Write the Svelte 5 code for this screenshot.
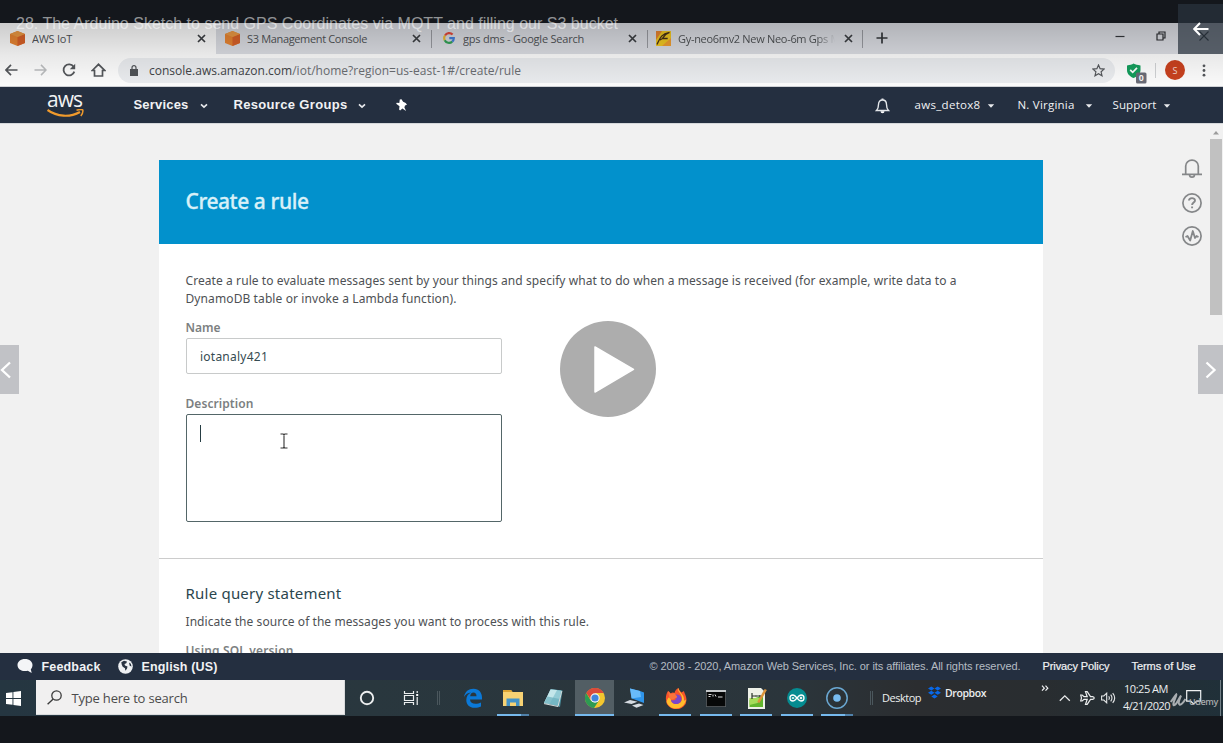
<script>
  // Spreads a line of text over a fixed measure by adjusting its tracking.
  function measure(node, width) {
    const natural = node.getBoundingClientRect().width;
    node.style.letterSpacing = `${(width - natural) / node.textContent.length}px`;
  }

  const tabs = [
    { label: 'AWS IoT', width: 40, icon: 'cube', active: true },
    { label: 'S3 Management Console', width: 120, icon: 'cube' },
    { label: 'gps dms - Google Search', width: 121, icon: 'google' },
    { label: 'Gy-neo6mv2 New Neo-6m Gps M', width: 162, icon: 'flash' },
  ];
</script>

{#snippet cube()}
  <svg width="15" height="15" viewBox="0 0 15 15"><path d="M7.5 0 15 3v9L7.5 15 0 12V3z" fill="#ec8733" /><path d="M7.5 6 15 3v9l-7.500 3z" fill="#dc6329" /><path d="M7.500 0 15 3 7.500 6 0 3z" fill="#f09c45" /></svg>
{/snippet}

{#snippet caret()}
  <svg width="8" height="6" viewBox="0 0 8 6"><path d="M.8 1.200h6.400L4 4.800z" fill="#e8eaed" /></svg>
{/snippet}

{#snippet chevron()}
  <svg width="8" height="6" viewBox="0 0 8 6"><path d="M1 1.300 4 4.200 7 1.300" fill="none" stroke="#e8eaed" stroke-width="1.600" /></svg>
{/snippet}

<div class="player">
  <div class="browser">
    <div class="tabs">
      {#each tabs as tab}
        <div class="tab" class:active={tab.active}>
          {#if tab.icon === 'cube'}
            {@render cube()}
          {:else if tab.icon === 'google'}
            <svg class="google" width="12" height="12" viewBox="0 0 12 12"><g fill="none" stroke-width="2.200"><path d="M2 3.500A4.800 4.800 0 0 1 9.600 2.600" stroke="#e64a3c" /><path d="M1.700 8.200A4.800 4.800 0 0 1 2 3.500" stroke="#f0bc34" /><path d="M9.200 9.600A4.800 4.800 0 0 1 1.700 8.200" stroke="#34a558" /><path d="M6.300 6.200h4.500a4.600 4.600 0 0 1-1.600 3.400" stroke="#4482e0" /></g></svg>
          {:else}
            <svg width="15" height="15" viewBox="0 0 15 15"><path d="M0 0h15v15H0z" fill="#f5cb22" /><path d="M0 0h6L0 9z" fill="#ea8630" /><path d="M15 7v8H6z" fill="#f4a030" /><path d="M1 13.500C4 7 5 3 13.500 1.500 9 3 8 5 6.500 7.500h5.200M6.500 7.500 4 9" fill="none" stroke="#473016" stroke-width="1.300" /></svg>
          {/if}
          <span class="label"><span use:measure={tab.width}>{tab.label}</span></span>
          <svg width="9" height="9" viewBox="0 0 9 9"><path d="m1 1 7 7M8 1 1 8" stroke="#3c3f43" stroke-width="1.700" /></svg>
        </div>
      {/each}
      <svg class="plus" width="12" height="12" viewBox="0 0 12 12"><path d="M6 .5v11M.5 6h11" stroke="#34373b" stroke-width="1.700" /></svg>
      <div class="controls">
        <svg width="10" height="10" viewBox="0 0 10 10"><path d="M.5 5.500h9" stroke="#35383c" stroke-width="1.200" /></svg>
        <svg width="10" height="10" viewBox="0 0 10 10"><path d="M1 3h6v6H1zM3 3V1h6v6H7" fill="none" stroke="#2c2f33" stroke-width="1.200" /></svg>
        <svg width="10" height="10" viewBox="0 0 10 10"><path d="m.5.500 9 9m0-9-9 9" stroke="#22262c" stroke-width="1.100" /></svg>
      </div>
    </div>

    <div class="toolbar">
      <svg width="13" height="12" viewBox="0 0 13 12"><path d="M12.500 6H1.200M6 .900 1 6l5 5.100" fill="none" stroke="#55585c" stroke-width="1.700" /></svg>
      <svg width="13" height="12" viewBox="0 0 13 12"><path d="M.5 6h11.300M7 .900 12 6l-5 5.100" fill="none" stroke="#bdbfc1" stroke-width="1.500" /></svg>
      <svg width="14" height="14" viewBox="0 0 14 14"><path d="M11.600 3.800A5.500 5.500 0 1 0 12.300 8.600" fill="none" stroke="#55585c" stroke-width="1.800" /><path d="M13.200.800v5.400H7.800z" fill="#55585c" /></svg>
      <svg width="15" height="14" viewBox="0 0 15 14"><path d="M1.300 7.500 7.500 1.300l6.200 6.200h-2.200V13h-8V7.500z" fill="none" stroke="#55585c" stroke-width="1.700" /></svg>
      <div class="url">
        <svg width="8" height="11" viewBox="0 0 8 11"><path d="M0 4h8v7H0z" fill="#515458" /><path d="M2 4.500V2.700a2 2 0 0 1 4 0v1.800" fill="none" stroke="#515458" stroke-width="1.200" /></svg>
        <span class="address" use:measure={372}><b>console.aws.amazon.com</b>/iot/home?region=us-east-1#/create/rule</span>
        <svg width="13" height="13" viewBox="0 0 13 13"><path d="m6.500 1 1.600 3.700 4 .400-3 2.700.900 4-3.500-2.100L3 11.800l.900-4-3-2.700 4-.400z" fill="none" stroke="#56595d" stroke-width="1.200" /></svg>
      </div>
      <svg class="shield" width="22" height="21" viewBox="0 0 22 21"><path d="M1 2.500C4 2 6 1.500 7.500.500 9.500 1.500 11.500 2 14.500 2.500V7c0 4-3.500 6.500-7 8C4 13.500 1 11 1 7z" fill="#149f5d" /><path d="m4.200 6.800 2.500 2.500L11 4.800" fill="none" stroke="#fff" stroke-width="1.700" /><rect x="10" y="9.500" width="10.500" height="11" rx="1.500" fill="#6b6d78" /><text x="12.700" y="18.400">0</text></svg>
      <i class="divider"></i>
      <span class="avatar">S</span>
      <svg width="4" height="13" viewBox="0 0 4 13"><g fill="#55585c"><circle cx="2" cy="1.800" r="1.400" /><circle cx="2" cy="6.500" r="1.400" /><circle cx="2" cy="11.200" r="1.400" /></g></svg>
    </div>

    <nav>
      <div class="logo">
        <span use:measure={35}>aws</span>
        <svg width="38" height="9" viewBox="0 0 38 9"><path d="M.5 1C10 8 23 8.500 33 3" fill="none" stroke="#f09a2c" stroke-width="2.200" /><path d="M29.500 1.300c3-1 5.500-1 6.300-.300.300 1.500-.300 4-2 6" fill="none" stroke="#f09a2c" stroke-width="1.500" /></svg>
      </div>
      <b><span use:measure={55}>Services</span></b>
      {@render chevron()}
      <b><span use:measure={114}>Resource Groups</span></b>
      {@render chevron()}
      <svg width="13" height="13" viewBox="0 0 13 13"><path d="M4.800.500 6.500.300l1.600 2.500 2.600 1.100 1.300 1.900-2 .8-.6 1.900 1.700 3.600-3.700-2.700-2.300 2.200-1-1.100.4-3.300L1.200 4.700l.500-.9 2.600.1z" fill="#fff" /></svg>
      <svg width="15" height="16" viewBox="0 0 15 16"><path d="M1.500 12.500c1.500-1.500 2-3 2-6 0-2.700 1.500-4.500 4-4.500s4 1.800 4 4.500c0 3 .500 4.500 2 6z" fill="none" stroke="#e4e7ea" stroke-width="1.400" /><path d="M7.500.500v1.500" stroke="#e4e7ea" stroke-width="2" /><path d="M5.500 13.200h4a2 2 0 0 1-4 0" fill="#fff" /></svg>
      <span><span use:measure={66}>aws_detox8</span></span>
      {@render caret()}
      <span><span use:measure={57}>N. Virginia</span></span>
      {@render caret()}
      <span><span use:measure={44}>Support</span></span>
      {@render caret()}
    </nav>

    <div class="viewport">
      <main>
        <header><h1 use:measure={123}>Create a rule</h1></header>
        <section class="details">
          <p><span use:measure={771}>Create a rule to evaluate messages sent by your things and specify what to do when a message is received (for example, write data to a</span></p>
          <p><span use:measure={271}>DynamoDB table or invoke a Lambda function).</span></p>
          <div class="caption name"><span use:measure={35}>Name</span></div>
          <div class="field"><span use:measure={68}>iotanaly421</span></div>
          <div class="caption desc"><span use:measure={68}>Description</span></div>
          <div class="area"><i></i>
            <svg width="8" height="16" viewBox="0 0 8 16"><path d="M.5 1h2.700l.800.700.800-.700h2.700M4 1.700v12.600M.5 15h2.700l.800-.700.800.700h2.700" fill="none" stroke="#333" stroke-width="1.100" /></svg>
          </div>
        </section>
        <section class="query">
          <h2><span use:measure={156}>Rule query statement</span></h2>
          <p><span use:measure={403.500}>Indicate the source of the messages you want to process with this rule.</span></p>
          <div class="caption sql"><span use:measure={108}>Using SQL version</span></div>
        </section>
      </main>
      <aside>
        <svg width="20" height="20" viewBox="0 0 20 20"><path d="M3.700 15V7a6.300 5.800 0 0 1 12.600 0v8M0 15.300h20M7.500 15.500a2.500 2.700 0 0 0 5 0" fill="none" stroke="#858789" stroke-width="1.700" /></svg>
        <svg width="20" height="20" viewBox="0 0 20 20"><circle cx="10" cy="10" r="9.100" fill="none" stroke="#858789" stroke-width="1.700" /><path d="M7 7.600C7 4.300 13 4.300 13 7.500c0 2-2.900 2.200-2.900 4.500M10.100 13.500v1.800" fill="none" stroke="#858789" stroke-width="1.900" /></svg>
        <svg width="20" height="20" viewBox="0 0 20 20"><circle cx="10" cy="10" r="9.100" fill="none" stroke="#858789" stroke-width="1.700" /><path d="M3.500 11 5.500 10l2.700 4.500 2.600-9.500 2.200 7 1.500-2 2 1" fill="none" stroke="#858789" stroke-width="1.800" stroke-linejoin="round" /></svg>
      </aside>
      <div class="scroll">
        <svg width="8" height="5" viewBox="0 0 8 5"><path d="M1 4.500h6L4 1z" fill="#9c9c9c" /></svg>
        <i></i>
        <svg width="8" height="5" viewBox="0 0 8 5"><path d="M1 .500h6L4 4z" fill="#444" /></svg>
      </div>
    </div>

    <footer>
      <svg width="16" height="14" viewBox="0 0 16 14"><path d="M8 0c4.500 0 7.500 2.700 7.500 6 0 2-.700 3.300-1.700 4.300l.900 3.700-3.900-2.200C5 13 .5 10.300.500 6 .500 2.700 3.500 0 8 0" fill="#f4f5f7" /></svg>
      <b><span use:measure={59}>Feedback</span></b>
      <svg width="15" height="15" viewBox="0 0 15 15"><circle cx="7.500" cy="7.500" r="7.300" fill="#eef0f2" /><path d="M3.300 3.300 6 1.800l3 .700-.700 1.700-1.800.900.500 1.300 2.500 1-.500 2.300-1.700 2-.300-2.500-2.300-1.500-1-2.200zM11 3.500l1.800 1.300.700 2.700-1.800-.700z" fill="#293341" /></svg>
      <b><span use:measure={76}>English (US)</span></b>
      <small><span use:measure={371}>© 2008 - 2020, Amazon Web Services, Inc. or its affiliates. All rights reserved.</span></small>
      <em><span use:measure={67}>Privacy Policy</span></em>
      <em><span use:measure={64}>Terms of Use</span></em>
    </footer>
  </div>

  <div class="taskbar">
    <div class="start"><svg width="15" height="15" viewBox="0 0 15 15"><path d="M0 2.100 6.500 1.200V7H0zM7.400 1.100 15 0v7H7.400zM0 8h6.500v5.800L0 12.900zM7.400 8H15v7l-7.600-1.100z" fill="#fff" /></svg></div>
    <div class="search">
      <svg width="15" height="15" viewBox="0 0 15 15"><circle cx="9.500" cy="5.500" r="4.700" fill="none" stroke="#3b3b3b" stroke-width="1.300" /><path d="M6.200 8.900.600 14.300" stroke="#3b3b3b" stroke-width="1.400" /></svg>
      <span use:measure={116}>Type here to search</span>
    </div>
    <div class="app"><svg width="16" height="16" viewBox="0 0 16 16"><circle cx="8" cy="8" r="6.200" fill="none" stroke="#eceeef" stroke-width="1.900" /></svg></div>
    <div class="app"><svg width="16" height="16" viewBox="0 0 16 16"><path d="M1.500 1v2.500h9V1M1.500 5.500h9v5h-9zM1.500 15v-2.500h9V15M14.200 1v2M14.200 7v8" fill="none" stroke="#eceeef" stroke-width="1.200" /><path d="M13.200 4h2v2h-2z" fill="#fff" /></svg></div>
    <i class="grip"></i>
    <div class="app"><svg width="20" height="20" viewBox="0 0 20 20"><path d="M1 9C2 3.500 5.500.700 10.500.700c5.500 0 8.500 4 8.500 8.800v2H7c.200 3 2.500 4.300 5.500 4.300 2 0 4-.500 5.500-1.400v4c-1.700.900-3.700 1.400-6.300 1.400-5.200 0-8.400-3.100-8.400-7.800 0-3.500 2-6.200 4.700-7.400C5 4.800 2.500 6.500 1 9m6.200-.8h6.300c0-2.600-1.200-3.800-3-3.800-2 0-3.100 1.600-3.300 3.800" fill="#0b79d8" /></svg></div>
    <div class="app open explorer"><svg width="20" height="18" viewBox="0 0 20 18"><path d="M0 1h8l1.500 2H20v14H0z" fill="#f7d273" /><path d="M0 1h8l1.500 2H0z" fill="#dca434" /><path d="M3.500 17V9.500h13V17H13v-3.500H7V17z" fill="#4493c8" /></svg></div>
    <div class="app"><svg width="20" height="20" viewBox="0 0 20 20"><path d="M7.500 1 19.500 2.500 17 19 14.500 18z" fill="#4a8f9e" /><path d="m7.500 1.500 11 1L15 18 1 15z" fill="#93cbd5" /><path d="M7.500 1.500 1 15l5.500 1.200L14 2z" fill="#c3e6ea" /><path d="m4.500 8.500-3.500 6.500 14 3 1.700-7z" fill="#68aebc" opacity=".7" /><path d="M1 15.600 15 18.500 18.800 3" fill="none" stroke="#d5dadb" /></svg></div>
    <div class="app open chrome"><svg width="20" height="20" viewBox="0 0 20 20"><circle cx="10" cy="10" r="10" fill="#f3c62e" /><path d="M10 10 1.300 5A10 10 0 0 1 18.700 5H10z" fill="#db4a3b" /><path d="M1.300 5A10 10 0 0 0 9 20l5-7.500H5.700z" fill="#2d9b53" /><path d="M1.300 5 6 12l4-7z" fill="#db4a3b" /><circle cx="10" cy="10" r="4.700" fill="#f4f4f4" /><circle cx="10" cy="10" r="3.600" fill="#4285dc" /></svg></div>
    <div class="app"><svg width="21" height="20" viewBox="0 0 21 20"><path d="m6 .5 10 2.500 4 1.500v10.500L8 10.500z" fill="#2f95ea" /><path d="m6 .5 10 2.500 1 6-9.500 1.500z" fill="#68bbfa" /><path d="M0 14.500 6 12l7.500 1.800L7.500 16zM8 17.500l7-2 4.500 1.500-7 2.700z" fill="#d6dce2" /></svg></div>
    <div class="app open"><svg width="22" height="21" viewBox="0 0 22 21"><path d="M3 3c1 .500 2 1.500 2.500 2.500C7.500 4 9 4.500 9.500 5 10 2.500 11.500 1 13.500 0c.500 2 1.500 3 3 4.500L19 3c0 2 2.500 4.500 2.500 9A10.200 9.300 0 0 1 1 12C.5 8.500 1.500 5.500 3 3" fill="#f8542b" /><path d="M13.500 0c-2 3.500 3.500 5 3.500 10.500 0 3-2.500 5.500-6 5.500s-5-2.500-5-4.500C4 8 3 9 1.500 14c2 4.500 5.500 6.500 9.500 6.500 6 0 9.500-4.500 10-9-1 1-1.500 1-2 1C19.500 6 14 5 13.500 0" fill="#ffbd2b" /><path d="M10.500 6.500c3.500-.500 6 1.500 6 4.500s-2.500 5-5.500 5-5-2-5-4.300c1.500 1 4 1 5.500-1.200-2 0-3-.700-3-2z" fill="#7a47c9" /><path d="M3 3 6 6l3.500-1C10 7 13 8 12 9.500 10 10 9.500 11 8 11.500 6 12 4 11 4 8z" fill="#fb743a" /></svg></div>
    <div class="app open"><svg width="20" height="17" viewBox="0 0 20 17"><path d="M0 0h20v17H0z" fill="#5c6265" /><path d="M0 0h20v2H0z" fill="#c5c8ca" /><path d="M.8 2h18.400v14.200H.8z" fill="#070808" /><path d="M2.500 4.500h3M2.500 6.500h2M7 4.500v2M9 4.500l1 2M12 7h4.500" stroke="#ddd" /></svg></div>
    <div class="app open"><svg width="20" height="21" viewBox="0 0 20 21"><path d="M1 0h13l4 4v17H1z" fill="#eef1e8" /><path d="M2.500 12 16 7.500V19h-13.500z" fill="#62b52c" /><path d="M2.500 10h9l3 1-4 4-8 2z" fill="#a5dc59" /><path d="M5 5v6M5 8h3M10 8h3M9 7v2M13 7v2" stroke="#293429" stroke-width="1.200" /><path d="m18.800 1.500-7.500 13" stroke="#db943a" stroke-width="2.500" /></svg></div>
    <div class="app open"><svg width="20" height="20" viewBox="0 0 20 20"><circle cx="10" cy="10" r="10" fill="#058c91" /><path d="M10 10C8 7.500 7.200 7 6 7a3 3 0 0 0 0 6c1.200 0 2-.500 4-3s2.800-3 4-3a3 3 0 0 1 0 6c-1.200 0-2-.500-4-3M4.800 10h2.400M12.800 10h2.400M14 8.800v2.400" fill="none" stroke="#fff" stroke-width="1.300" /></svg></div>
    <div class="app open recorder"><svg width="22" height="22" viewBox="0 0 22 22"><circle cx="11" cy="11" r="10.200" fill="none" stroke="#6aa7d1" stroke-width="1.500" /><circle cx="11" cy="11" r="3.800" fill="#78bbef" /></svg></div>
    <i class="grip second"></i>
    <div class="desktop"><span use:measure={39}>Desktop</span></div>
    <div class="dropbox">
      <svg width="13" height="13" viewBox="0 0 13 13"><path d="M3.300.500 6.500 2.500 3.300 4.500 0 2.500zM9.700.500 13 2.500 9.700 4.500 6.500 2.500zM3.300 4.800l3.200 2-3.200 2-3.300-2zM9.700 4.800l3.300 2-3.300 2-3.200-2zM6.500 8.600 9.700 10.500 6.500 12.500 3.300 10.500z" fill="#0868e8" /></svg>
      <span use:measure={41}>Dropbox</span>
    </div>
    <svg class="more" width="8" height="7" viewBox="0 0 8 7"><path d="m1 .700 2.300 2.500L1 5.700M4.500.700l2.300 2.500-2.300 2.500" fill="none" stroke="#f0f1f2" stroke-width="1.200" /></svg>
    <div class="tray">
      <svg width="12" height="8" viewBox="0 0 12 8"><path d="m.8 6.800 5-5 5 5" fill="none" stroke="#e8eaeb" stroke-width="1.300" /></svg>
      <svg width="15" height="14" viewBox="0 0 15 14"><path d="M.7 4h1.500L4 5.700h3.200L5.500.700h1.700L10.500 5.700h2c2.300.500 2.300 2.100 0 2.600h-2l-3.300 5H5.500l1.700-5H4L2.200 10H.7l.8-3z" fill="none" stroke="#eceeef" stroke-width="1.200" /></svg>
      <svg width="15" height="12" viewBox="0 0 15 12"><path d="M.6 4h2.200L5.700 1.200v9.600L2.800 8H.6zM7.700 4.200q1.300 1.800 0 3.600M9.700 2.700q2.500 3.300 0 6.600M11.700 1.200q4 4.800 0 9.600" fill="none" stroke="#e6e8e9" stroke-width="1.100" /></svg>
    </div>
    <div class="clock"><span use:measure={44}>10:25 AM</span><span use:measure={47}>4/21/2020</span></div>
    <div class="notify">
      <svg width="16" height="15" viewBox="0 0 16 15"><path d="M.7.700h14v10.500h-4L7.700 14l-3-2.800h-4z" fill="none" stroke="#eef0f1" stroke-width="1.200" /></svg>
      <div class="brand">
        <svg width="17" height="15" viewBox="0 0 17 15"><path d="M.8 9C3 6 5 2.500 6.200 1.500 7 3.500 2.500 9 3.500 11.800 5 14 9 6 11 2.500 9 7 8 10.500 9.500 11.500c2 .8 4.500-3 6-5.500" fill="none" stroke="#a9adb0" stroke-width="2.100" /></svg>
        <span use:measure={29}>Udemy</span>
      </div>
    </div>
    <i class="edge"></i>
  </div>

  <div class="shade"></div>
  <div class="title"><span use:measure={602}>28. The Arduino Sketch to send GPS Coordinates via MQTT and filling our S3 bucket</span></div>
  <div class="back"><svg width="16" height="14" viewBox="0 0 16 14"><path d="M15.500 7H1.500M7 1 1.200 7 7 13" fill="none" stroke="#fff" stroke-width="2" /></svg></div>
  <div class="step previous"><svg width="12" height="18" viewBox="0 0 12 18"><path d="M10 1.500 2 9l8 7.500" fill="none" stroke="#fff" stroke-width="2.300" /></svg></div>
  <div class="step next"><svg width="12" height="18" viewBox="0 0 12 18"><path d="m1.500 1.500 8 7.500-8 7.500" fill="none" stroke="#fff" stroke-width="2.300" /></svg></div>
  <svg class="play" width="96" height="96" viewBox="0 0 96 96"><circle cx="48" cy="48" r="48" fill="#adadad" /><path d="M35 26v45l38.500-22.700z" fill="#fff" stroke="#fff" stroke-width="1.500" stroke-linejoin="round" /></svg>
</div>

<style>
  :global(body) { background: #14171c; }
  .player { position: relative; box-sizing: border-box; width: 1223px; height: 743px; padding-top: 23px; overflow: hidden; background: #14171c; font-family: "Open Sans", sans-serif; }
  .player :global(svg) { display: block; flex: none; }
  span { white-space: nowrap; }
  .browser { display: grid; grid-template-rows: 31px 33px 36px 530px 27px; height: 657px; }

  .tabs { display: grid; grid-template-columns: 216px 215px 216px 216px 231px 1fr; background: linear-gradient(#9b9da3, #9b9da3) 862px 7px / 1px 18px no-repeat, #dee0e6; }
  .tab { display: flex; align-items: center; box-sizing: border-box; padding: 0 10px 1px 9px; gap: 7px; font-size: 11px; color: #515457; min-width: 0; }
  .tab.active { background: #fff; padding-left: 10px; }
  .tab:nth-child(3), .tab:nth-child(4) { background: linear-gradient(#9b9da3, #9b9da3) 0 7px / 1px 18px no-repeat; }
  .tab:nth-child(3) { padding-left: 12px; gap: 8px; }
  .label { flex: 1; overflow: hidden; min-width: 0; }
  .tab:nth-child(4) .label { margin-right: 2px; mask-image: linear-gradient(90deg, #000 138px, transparent 157px); }
  .plus { box-sizing: content-box; padding: 9px 0 10px 13px; width: 12px; }
  .controls { display: grid; grid-template-columns: 41px 43px 10px; align-items: center; padding: 0 0 5px 21px; }

  .toolbar { display: grid; grid-template-columns: 29px 28px 29px 27px 1009px 28px 10px 37px 4px; align-items: center; padding-left: 5px; background: #fff; border-bottom: 1px solid #cfd1d5; }
  .url { display: grid; grid-template-columns: 19px 943px 13px; align-items: center; width: 997px; height: 25px; box-sizing: border-box; padding-left: 12px; border-radius: 13px; background: #edeff2; }
  .address { justify-self: start; font-size: 12px; color: #6b6e72; }
  .address b { color: #414448; font-weight: 400; }
  .toolbar :global(svg text) { font: bold 9px "Liberation Sans", sans-serif; fill: #fff; }
  .shield { margin: 6px 0 0 -1px; }
  .divider { width: 1px; height: 15px; background: #d2d4d6; }
  .avatar { display: grid; place-items: center; width: 20px; height: 20px; border-radius: 50%; background: #cb421f; color: #f5dcd4; font-size: 9px; }

  nav { display: grid; grid-template-columns: 86.500px 66px 34px 124px 37px 480.500px 39.500px 72px 31px 67px 28px 50px 1fr; align-items: center; padding: 0 0 1px 47px; background: #242f40; color: #f1f2f4; font-size: 11.500px; }
  nav b { font: bold 13px "Liberation Sans", sans-serif; }
  nav > :global(svg) { margin-top: 2px; }
  .logo { display: flex; flex-direction: column; align-items: flex-start; height: 28px; }
  .logo span { font-size: 21px; font-weight: 500; line-height: 20px; margin-top: -2px; }
  .logo svg { margin: 0 0 0 -.5px; }

  .viewport { display: grid; grid-template-columns: 159px 884px 139px 28px 13px; overflow: hidden; background: #f1f1f1; border-top: 1px solid #d5d8db; box-sizing: border-box; }
  main { grid-column: 2; margin-top: 36px; background: #fff; color: #4e5154; font-family: "Noto Sans", sans-serif; font-size: 12px; height: 520px; }
  header { display: flex; align-items: center; height: 84px; padding: 0 0 2px 26.500px; background: #0291cc; box-sizing: border-box; }
  h1 { margin: 0; font-size: 21px; font-weight: 500; white-space: nowrap; color: #d8f0f8; -webkit-text-stroke: .3px; }
  .details { display: flex; flex-direction: column; height: 315px; box-sizing: border-box; padding: 28px 27px 0; border-bottom: 1px solid #ccc; }
  p { margin: 0 0 0 -.5px; line-height: 18px; }
  .caption { margin-left: -.5px; font-weight: 600; color: #7c7f81; line-height: 18px; }
  .name { margin-top: 11px; }
  .field { display: flex; align-items: center; width: 316px; height: 36px; box-sizing: border-box; padding-left: 13px; margin-top: 1px; border: 1px solid #c8caca; border-radius: 2px; color: #354b51; }
  .desc { margin-top: 21px; }
  .area { display: flex; gap: 79px; width: 316px; height: 108px; box-sizing: border-box; padding: 10px 13px; margin-top: 1px; border: 1px solid #546668; border-radius: 2px; }
  .area i { width: 1px; height: 17px; background: #263d43; }
  .area svg { margin-top: 8px; }
  .query { padding: 23px 27px 0; }
  h2 { margin: 0 0 0 -.5px; font-size: 15px; font-weight: 400; line-height: 22px; color: #2b464e; }
  .query p { margin-top: 9px; }
  .sql { margin-top: 11px; }
  aside { display: flex; flex-direction: column; gap: 13.500px; grid-column: 4; padding-top: 35px; }
  .scroll { display: flex; flex-direction: column; align-items: center; width: 12px; grid-column: 5; }
  .scroll svg:first-child { margin-top: 6px; }
  .scroll i { width: 12px; height: 176px; margin-top: 4px; background: #c1c1c1; }
  .scroll svg:last-child { margin: auto 0 5px; }

  footer { display: grid; grid-template-columns: 24.500px 76px 24px 508px 393px 89px 1fr; align-items: center; padding: 0 0 1px 17px; background: #242f40; color: #f1f2f4; font: 11px "Liberation Sans", sans-serif; }
  footer b { font-size: 12.500px; padding-top: 1px; }
  footer small { font-size: 11px; color: #b5bcc3; }
  footer em { font-style: normal; -webkit-text-stroke: .2px; }

  .taskbar { display: grid; grid-template-columns: 36px 309px 44px 43px 21px 40px 40px 40px 41px 41px 41px 40px 41px 40px 39px 27px 45px 113px 18px 65px 47px 50px 1fr; height: 36px; background: linear-gradient(90deg, #253641, #29373e 30%, #2b353b 65%, #2b2d30 75%, #292d30 85%, #203039); color: #eceeef; font-size: 11px; }
  .start { display: grid; place-items: center start; padding-left: 6px; }
  .search { display: flex; align-items: center; gap: 9.500px; padding: 1px 0 0 11px; margin-bottom: 1px; background: #f1f0f0; border: 1px solid #d9dadb; border-top: 0; border-left: 0; color: #4b4b4b; font-size: 13px; }
  .app { display: grid; place-items: center; position: relative; }
  .open::after { content: ""; position: absolute; bottom: 0; left: 4px; width: 32px; height: 2px; background: #76b9ed; }
  .explorer::after, .recorder::after { background: linear-gradient(90deg, #76b9ed 24px, #5081aa 24px); }
  .chrome { background: #525e64; margin: 0 0 0 2px; }
  .chrome::after { left: 0; width: 39px; }
  .grip { align-self: center; justify-self: center; width: 1px; height: 14px; border: solid #4b575d; border-width: 0 1px; margin-left: -8px; }
  .second { margin-left: 3px; }
  .desktop { padding: 10px 0 0 0; margin-left: -1px; }
  .dropbox { display: flex; align-items: flex-start; gap: 4px; padding-top: 6px; font-weight: 600; font-size: 10.500px; }
  .more { margin-top: 5px; }
  .tray { display: grid; grid-template-columns: 21px 21.500px 15px; align-items: center; margin-left: -.5px; }
  .clock { display: flex; flex-direction: column; align-items: flex-start; padding-top: 1px; line-height: 16.500px; }
  .clock span:last-child { margin-left: -1px; }
  .notify { position: relative; display: grid; justify-items: end; padding: 10px 0 0; margin-right: 19px; }
  .brand { position: absolute; left: -1px; top: 13px; display: flex; align-items: flex-end; color: #a5a9ab; font-size: 9px; font-weight: 600; gap: 2px; line-height: 13px; }
  .edge { width: 1px; margin-left: -1px; background: #728087; }

  .shade { position: absolute; inset: 23px 0 auto; height: 63px; background: linear-gradient(rgba(0, 0, 0, .2), rgba(0, 0, 0, .09) 50%, rgba(0, 0, 0, .02)); }
  .title { position: absolute; left: 16px; top: 15px; color: rgba(255, 255, 255, .55); font: 16px/18px "Liberation Sans", sans-serif; }
  .back { position: absolute; right: 0; top: 4px; width: 45px; height: 50px; display: grid; place-items: center; background: rgba(42, 51, 62, .72); }
  .step { position: absolute; top: 345px; display: grid; align-items: center; height: 49px; background: #c1c2c6; }
  .previous { left: 0; width: 19px; }
  .next { right: 0; width: 25px; padding-left: 7px; box-sizing: border-box; }
  .play { position: absolute; left: 560px; top: 321px; }
</style>
